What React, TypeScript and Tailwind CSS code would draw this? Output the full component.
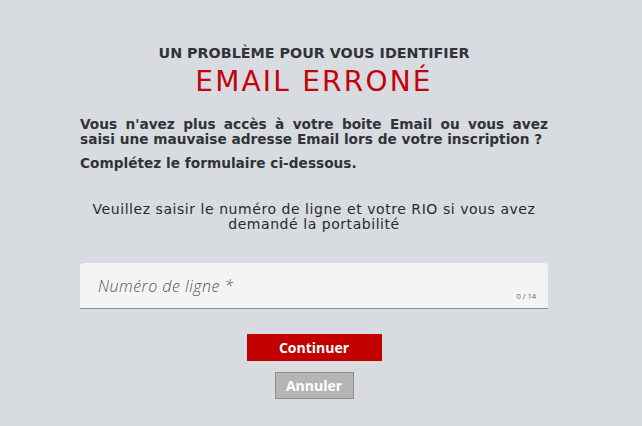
import React from 'react';

const App = () => {
  return (
    <div className="min-h-[426px] w-full bg-[#d8dce0] font-['DejaVu_Sans',sans-serif] text-[#323239]">
      <div className="ml-[80px] w-[468px] pt-[44px]">
        <h2 className="text-center text-[14.3px] font-bold uppercase leading-[18px]">
          Un problème pour vous identifier
        </h2>
        <h1 className="mt-[4px] text-center text-[28px] leading-[32px] tracking-[2.2px] text-[#c4000b]">
          EMAIL ERRONÉ
        </h1>
        <p className="mt-[18.5px] text-justify text-[13.7px] font-bold leading-[15px]">
          Vous n'avez plus accès à votre boite Email ou vous avez saisi une mauvaise adresse Email lors de votre inscription ?
        </p>
        <p className="mt-[9px] text-[13.7px] font-bold leading-[15px]">Complétez le formulaire ci-dessous.</p>
        <p className="mx-auto mt-[31px] w-[458px] text-center text-[14px] leading-[15px] tracking-[0.55px] text-[#2a2a30]">
          Veuillez saisir le numéro de ligne et votre RIO si vous avez demandé la portabilité
        </p>

        <div className="relative mt-[31px] h-[46px] rounded-t-[4px] border-b border-[#8c8c8c] bg-[#f4f4f4] pl-[18px] pt-[13px]">
          <span className="block font-['Open_Sans',sans-serif] text-[16px] font-light italic leading-[20px] tracking-[0.5px] text-[#555]">
            Numéro de ligne *
          </span>
          <span className="absolute bottom-[7px] right-[12px] font-['Open_Sans',sans-serif] text-[7.5px] leading-[10px] text-[#666]">
            0 / 14
          </span>
        </div>

        <div className="mt-[25px] flex flex-col items-center gap-[11px] font-['Open_Sans',sans-serif]">
          <button className="h-[27px] w-[135px] bg-[#c20000] text-[14px] font-bold text-white">
            Continuer
          </button>
          <button className="h-[27px] w-[79px] border border-[#8e8e8e] bg-[#b5b5b5] text-[14px] font-bold text-white">
            Annuler
          </button>
        </div>
      </div>
    </div>
  );
};

export default App;
